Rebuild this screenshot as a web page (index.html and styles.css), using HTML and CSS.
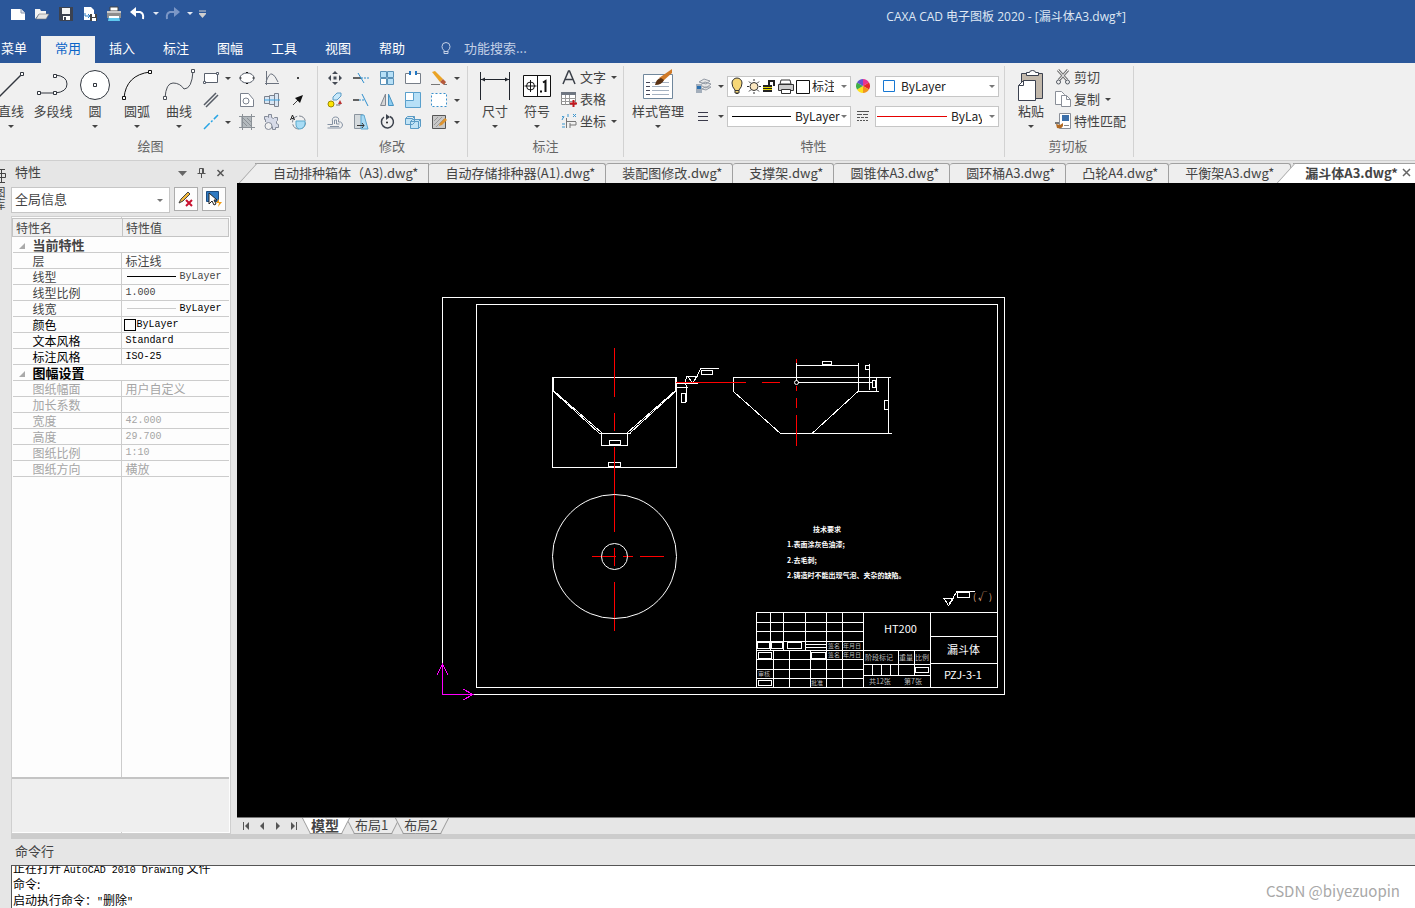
FILE: index.html
```html
<!DOCTYPE html>
<html lang="zh-CN">
<head>
  <meta charset="UTF-8">
  <meta name="viewport" content="width=device-width, initial-scale=1.0">
  <title>CAXA CAD 电子图板 2020</title>
  <link rel="stylesheet" href="styles.css">
</head>
<body>
  <header class="titlebar">
    <div class="quick">
      <button class="quick__button" aria-label="新建"><svg width="16" height="14"><path d="M1 2h10l4 4v7H1z" fill="#fff"/><path d="M11 2v4h4" fill="#dde3ee" stroke="#8a96ad"/></svg></button>
      <button class="quick__button" aria-label="打开"><svg width="16" height="14"><path d="M1 12V2h5l1 2h5v3H5z" fill="#f4f4f4"/><path d="M2 12l3-5h10l-3 5z" fill="#e4e4e4" stroke="#777" stroke-width=".6"/></svg></button>
      <button class="quick__button" aria-label="保存"><svg width="16" height="14"><path d="M1 0h14v14H2l-1-1z" fill="#3c4250"/><path d="M4 1h8v6H4z" fill="#f5f5f5"/><path d="M5 9h7v4H5z" fill="#fff"/><path d="M6 10h2v3H6z" fill="#3c4250"/></svg></button>
      <button class="quick__button" aria-label="另存为"><svg width="16" height="16"><path d="M2 1h7l3 3v10H2z" fill="#fff"/><path d="M3 7v3h5M6 8l2 2-2 2" fill="none" stroke="#2b7ac2"/><path d="M8 8h7v7H8z" fill="#444"/><path d="M10 8h3v3h-3zM10 12h4v3h-4z" fill="#fff"/></svg></button>
      <button class="quick__button" aria-label="打印"><svg width="16" height="16"><path d="M4 1h8v4H4z" fill="#fff" stroke="#444"/><path d="M1 5h14v7H1z" fill="#8d8d8d"/><path d="M1 5h14v2H1z" fill="#c9c9c9"/><path d="M3 10h10l1 5H2z" fill="#5fc8ee"/><path d="M3 10h10v2H3z" fill="#fff"/></svg></button>
      <button class="quick__button" aria-label="撤销"><svg width="16" height="14"><path d="M2 5h8q4 1 3 7" fill="none" stroke="#fff" stroke-width="2"/><path d="M0 5l6-5v10z" fill="#fff"/></svg></button>
      <button class="quick__drop" aria-label="撤销列表"><i class="caret caret--light"></i></button>
      <button class="quick__button quick__button--off" aria-label="恢复"><svg width="16" height="14"><path d="M14 5H6Q2 6 3 12" fill="none" stroke="#7c97c6" stroke-width="2"/><path d="M16 5l-6-5v10z" fill="#7c97c6"/></svg></button>
      <button class="quick__drop" aria-label="恢复列表"><i class="caret caret--light"></i></button>
      <button class="quick__drop" aria-label="自定义快速访问"><svg width="7" height="8"><path d="M0 1h7M0 3.500h7" stroke="#cfcfcf"/><path d="M0 4h7l-3.500 4z" fill="#cfcfcf"/></svg></button>
    </div>
    <h1 class="titlebar__title">CAXA CAD 电子图板 2020 - [漏斗体A3.dwg*]</h1>
  </header>

  <nav class="menu">
    <button class="menu__tab">菜单</button>
    <button class="menu__tab is-active">常用</button>
    <button class="menu__tab">插入</button>
    <button class="menu__tab">标注</button>
    <button class="menu__tab">图幅</button>
    <button class="menu__tab">工具</button>
    <button class="menu__tab">视图</button>
    <button class="menu__tab">帮助</button>
    <label class="menu__search">
      <svg width="12" height="14" fill="none" stroke="#c3d0e6"><path d="M4 9.500Q2 8 2 5.500a4 4 0 0 1 8 0Q10 8 8 9.500v3H4zM4 10.500h4"/></svg>
      <input class="menu__input" type="text" placeholder="功能搜索..." aria-label="功能搜索">
    </label>
  </nav>

  <div class="ribbon">
    <section class="group group--draw">
      <div class="group__body">
        <button class="big"><svg width="34" height="34"><path d="M3 32L28 7" stroke="#32373f" stroke-width="1.500"/><path d="M26.500 5.500h3v3h-3z" fill="#fff" stroke="#32373f"/></svg><span>直线</span><i class="caret"></i></button>
        <button class="big"><svg width="34" height="34" fill="none" stroke="#32373f"><path d="M3 26h16q12-1 12-9t-12-9"/><g fill="#fff"><path d="M1.500 24.500h3v3h-3zM17.500 24.500h3v3h-3zM17.500 7.500h3v3h-3z"/></g></svg><span>多段线</span></button>
        <button class="big"><svg width="34" height="34"><circle cx="17" cy="18" r="14.500" fill="#fff" stroke="#32373f"/><path d="M15.500 16.500h3v3h-3z" fill="#fff" stroke="#32373f"/></svg><span>圆</span><i class="caret"></i></button>
        <button class="big"><svg width="34" height="34" fill="none" stroke="#111"><path d="M4 31Q6 8 30 5"/><path d="M2.500 29.500h3v3h-3zM28.500 3.500h3v3h-3z" fill="#fff"/></svg><span>圆弧</span><i class="caret"></i></button>
        <button class="big"><svg width="34" height="34" fill="none" stroke="#4b5058"><path d="M3 31Q4 16 11 16t11 6Q30 22 31 4"/><path d="M1.500 29.500h3v3h-3zM29.500 2.500h3v3h-3z" fill="#fff"/></svg><span>曲线</span><i class="caret"></i></button>
        <div class="tools tools--draw">
          <button class="tool" aria-label="矩形"><svg width="16" height="16" fill="#fff" stroke="#59606c"><path d="M1.500 3.500h13v9h-13z"/><path d="M13.500 2.500h2v2h-2zM.5 11.500h2v2h-2z"/></svg></button>
          <button class="drop" aria-label="矩形选项"><i class="caret"></i></button>
          <button class="tool" aria-label="椭圆"><svg width="16" height="16" fill="#fff" stroke="#59606c"><ellipse cx="8" cy="8" rx="7" ry="5"/><path d="M7 2.500h2M7 13.500h2M.5 8h2M13.500 8h2" stroke="#111"/></svg></button>
          <button class="tool" aria-label="公式曲线"><svg width="16" height="16" fill="none" stroke="#6b727e"><path d="M2.500 1v14M1 13.500h14M2 12Q5 3 8 4t6 8"/></svg></button>
          <button class="tool" aria-label="点"><svg width="16" height="16"><path d="M7 7h2v2H7z" fill="#444"/></svg></button>
          <button class="tool" aria-label="平行线"><svg width="16" height="16" stroke="#565c66" stroke-width="1.500"><path d="M1 13L13 1M3 15L15 3"/></svg></button>
          <span></span>
          <button class="tool" aria-label="局部放大"><svg width="16" height="16" fill="#fff" stroke="#7b828e"><path d="M1.500 1.500h8l5 6v7h-13z"/><circle cx="7" cy="9" r="3"/></svg></button>
          <button class="tool" aria-label="轴孔"><svg width="16" height="16" fill="#d9e6f3" stroke="#7b828e"><path d="M.5 4.500h5v7h-5zM5.500 3.500h5v9h-5zM10.500 1.500h4v13h-4z"/><path d="M0 8h16" stroke="#3ba2e0"/></svg></button>
          <button class="tool" aria-label="箭头"><svg width="16" height="16"><path d="M3 13l5-5" stroke="#444"/><path d="M13 3l-3 8-5-5z" fill="#111"/></svg></button>
          <button class="tool" aria-label="中心线"><svg width="16" height="16"><path d="M1 15L15 1" stroke="#27a5e5" stroke-width="1.500" stroke-dasharray="8 2 2 2"/></svg></button>
          <button class="drop" aria-label="中心线选项"><i class="caret"></i></button>
          <button class="tool" aria-label="填充"><svg width="16" height="16"><path d="M2 2h11v11H2z" fill="#b3b9bd"/><path d="M3.500 0v16M0 2.500h16M0 13.500h16M12.500 0v16" stroke="#8b9197"/><path d="M4 4l8 8M4 8l4 4M8 4l4 4" stroke="#8b9197"/></svg></button>
          <button class="tool" aria-label="齿形"><svg width="16" height="16" fill="#d7dbe8" stroke="#848b99"><path d="M1.500 8V5.500h-1v-3h3l1 1V.5h3v3l2 1 1-1h3v3l-1 1v2l2 1v3h-3v2h-3v-3"/><circle cx="4.500" cy="12" r="3.500" fill="#f0f0f0"/></svg></button>
          <button class="tool" aria-label="圆弧过渡"><svg width="16" height="16"><circle cx="9" cy="8.500" r="6.500" fill="none" stroke="#7b828e" stroke-dasharray="8 2"/><path d="M6 7h9v3q-1 5-6 5-3-1-3-4z" fill="#a8dcf5" stroke="#5aa9cc"/><path d="M.5 6l2-5 2 5M1.500 4.500h2" fill="none" stroke="#222"/></svg></button>
        </div>
      </div>
      <h2 class="group__label">绘图</h2>
    </section>

    <section class="group group--modify">
      <div class="group__body">
        <div class="tools tools--modify">
          <button class="tool" aria-label="平移"><svg width="16" height="16" fill="#444a54"><path d="M6.500 6.500h3v3h-3zM8 1l3 3H5zM8 15l3-3H5zM1 8l3-3v6zM15 8l-3-3v6z"/></svg></button>
          <button class="tool" aria-label="裁剪"><svg width="16" height="16" fill="none" stroke="#2e8fce"><path d="M0 8h8" stroke="#333" stroke-width="1.500"/><path d="M8 8h8" stroke-dasharray="2 1"/><path d="M5 3l6 10"/></svg></button>
          <button class="tool" aria-label="阵列"><svg width="16" height="16" fill="#b7e0f7" stroke="#5a92b8"><path d="M1.500 1.500h6v6h-6zM8.500 1.500h6v6h-6zM8.500 8.500h6v6h-6z"/><path d="M1.500 8.500h6v6h-6z" fill="#fff"/></svg></button>
          <button class="tool" aria-label="打断"><svg width="16" height="16" fill="#fff"><path d="M5 3.500H.5v10h15v-10H11" stroke="#777e88"/><path d="M4 1h2v4H4zM10 1h2v4h-2z" fill="#2377c2"/></svg></button>
          <button class="tool" aria-label="删除"><svg width="16" height="16"><path d="M1 2l3-1 8 8-3 3z" fill="#eaa325"/><path d="M9 12l3-3 3 3-2 3z" fill="#b4593c"/><path d="M0 14.500h9M13 14.500h3" stroke="#777"/></svg></button>
          <button class="drop" aria-label="删除选项"><i class="caret"></i></button>
          <button class="tool" aria-label="平移复制"><svg width="16" height="16"><circle cx="4" cy="12" r="3" fill="#ffe500" stroke="#9b8a00"/><path d="M6 5l4-4h4v3l-4 4H6z" fill="#c7e8fa" stroke="#5a9bc5"/><path d="M9 13h4v-3" fill="none" stroke="#777"/><path d="M13 8l2 4h-4z" fill="#b33"/></svg></button>
          <button class="tool" aria-label="延伸"><svg width="16" height="16" fill="none"><path d="M0 8h6" stroke="#333" stroke-width="1.500"/><path d="M6 8h5" stroke="#2e8fce" stroke-dasharray="2 1"/><path d="M9 2l6 12" stroke="#2e8fce"/></svg></button>
          <button class="tool" aria-label="镜像"><svg width="16" height="16"><path d="M6.500 2v11.500h-5z" fill="#d6d6d6" stroke="#808790"/><path d="M9.500 2v11.500h5z" fill="#8fcdf0" stroke="#4593c2"/></svg></button>
          <button class="tool" aria-label="缩放"><svg width="16" height="16" fill="#b7e0f7" stroke="#5aa0cc"><path d="M.5.5h15v15H.5z"/><path d="M.5.5h8v8h-8z" fill="#fff"/></svg></button>
          <button class="tool" aria-label="拉伸"><svg width="16" height="16"><path d="M.5 1.500h15v13H.5z" fill="#fff" stroke="#3a90cc" stroke-dasharray="2 2"/></svg></button>
          <button class="drop" aria-label="拉伸选项"><i class="caret"></i></button>
          <button class="tool" aria-label="等距线"><svg width="16" height="16" fill="none" stroke="#8592a3"><path d="M.5 10.500h5V8q-1-5 3-5t3 4v1h2q2 1 2 3t-2 3H.500M3 12.500h9M7.500 10V6h2v4h3"/></svg></button>
          <button class="tool" aria-label="拔模"><svg width="16" height="16"><path d="M1.500.5h8v14h-8z" fill="#d5dadd" stroke="#8b949e"/><path d="M8 1h3l4 14H8z" fill="#a9daf4" stroke="#5ba6cf"/><path d="M4 11.500h7M9 9l2 2.500L9 14" fill="none" stroke="#333"/></svg></button>
          <button class="tool" aria-label="旋转"><svg width="16" height="16"><path d="M11 2.500A6 6 0 1 1 5 3" fill="none" stroke="#3d434d" stroke-width="1.500"/><path d="M7 0v6l4-3z" fill="#3d434d"/><circle cx="8" cy="8.500" r="1" fill="#222"/></svg></button>
          <button class="tool" aria-label="块"><svg width="16" height="16" fill="#c1e3f5" stroke="#5a9bc5"><path d="M.5 4.500l2-2h7v6l-2 2h-7zM.5 4.500h7l2-2M5.500 7.500l2-2h8v7l-2 2h-8zM5.500 7.500h8v7M13.500 7.500l2-2"/></svg></button>
          <button class="tool" aria-label="填充编辑"><svg width="16" height="16"><path d="M1.500 1.500h13v13h-13z" fill="#c8c8c8" stroke="#555"/><path d="M3 7l4-4M3 11l8-8M5 13l8-8" stroke="#999"/><path d="M8 12l1-3 5-5 2 2-5 5z" fill="#dd9430"/></svg></button>
          <button class="drop" aria-label="填充编辑选项"><i class="caret"></i></button>
        </div>
      </div>
      <h2 class="group__label">修改</h2>
    </section>

    <section class="group group--annotate">
      <div class="group__body">
        <button class="big"><svg width="34" height="34" stroke="#22262e"><path d="M2.500 5v28M31.500 5v28M3 12.500h28"/><path d="M3 12.500l4-2v4zM31 12.500l-4-2v4z" fill="#22262e" stroke="none"/></svg><span>尺寸</span><i class="caret"></i></button>
        <button class="big"><svg width="34" height="34" fill="none" stroke="#111"><path d="M3.500 8.500h27v21h-27zM17.500 8v22" fill="#fff"/><circle cx="10.500" cy="19" r="4"/><path d="M10.500 13v12M4.500 19h12"/><path d="M20 24.500h2M23 15.500l2.500-1.500v11" stroke-width="2"/></svg><span>符号</span><i class="caret"></i></button>
        <div class="list">
          <button class="item"><svg width="16" height="16"><path d="M2 15L7.500 2h1L14 15M4.500 10.500h7" fill="none" stroke="#3a3f48" stroke-width="1.500"/></svg>文字<i class="caret"></i></button>
          <button class="item"><svg width="16" height="16"><path d="M.5 1.500h14v12H.5z" fill="#fff" stroke="#888"/><path d="M0 1h15v3H0z" fill="#6f7681"/><path d="M0 7.500h15M0 10.500h15M4.500 4v10M8.500 4v10" stroke="#999"/><path d="M9 12.500h7M12.500 9v7" stroke="#c4161c" stroke-width="2"/></svg>表格</button>
          <button class="item"><svg width="16" height="16" fill="none" stroke="#777"><path d="M5.500 5v10M5 8.500h10M9 12h6v-3M9 15v-5"/><path d="M1 3l2 2M3 3L1 7M12 1l3 3M15 1l-3 3M1 11h3M1 14h3M7 1v3" stroke="#3b96cf"/></svg>坐标<i class="caret"></i></button>
        </div>
      </div>
      <h2 class="group__label">标注</h2>
    </section>

    <section class="group group--props">
      <div class="group__body">
        <button class="big big--wide"><svg width="34" height="34"><path d="M2.500 7.500h29v24h-29z" fill="#fff" stroke="#70879c"/><path d="M5 15.500h4M5 19.500h4M5 23.500h4M5 27.500h4" stroke="#445"/><path d="M11 15.500h17M11 19.500h17M11 23.500h17M11 27.500h17" stroke="#a4b1c0"/><path d="M31 2v4l-9 8-4-3z" fill="#d07a28"/><path d="M14 18q1-6 6-7l3 2q-2 5-9 5z" fill="#5a3213"/></svg><span>样式管理</span><i class="caret"></i></button>
        <div class="fields">
          <button class="tool" aria-label="图层"><svg width="16" height="16"><path d="M4 4l5-3 6 2-4 3zM5 7l5-3 6 2-5 4zM7 11l3-2 6 0-5 3z" fill="#e7e7e7" stroke="#949ba5"/><path d="M1 6h6v9H1z" fill="#a3aebb"/><path d="M2 8h4v3H2z" fill="#2b70b0"/></svg></button>
          <button class="drop" aria-label="图层选项"><i class="caret"></i></button>
          <div class="combo">
            <select class="combo__select combo__select--layer" aria-label="当前图层"><option>标注线</option></select>
            <svg class="combo__mark" width="84" height="20"><path d="M7 14Q4 11 4 7a5 5 0 0 1 10 0q0 4-3 7v3H7z" fill="#f6d777" stroke="#333"/><path d="M7 14.500h4M8 17.500h2" stroke="#333"/><circle cx="26" cy="10.500" r="4" fill="#fbe7c0" stroke="#333"/><path d="M26 3v2M26 16v2M19 10.500h2M31 10.500h2M21 5.500l1.500 1.500M29.500 14l1.500 1.500M31 5.500L29.500 7M22.500 14L21 15.500" stroke="#333"/><path d="M35 9h9v7h-9z" fill="#222"/><path d="M35 11.500h9M35 13.500h9" stroke="#e8d900"/><path d="M41 9V5h5v5" fill="none" stroke="#222" stroke-width="2"/><path d="M53 4h9l1 4H52z" fill="#fff" stroke="#333"/><path d="M50.500 8.500h15v6h-15z" fill="#ccc" stroke="#333"/><path d="M53.500 13.500h9v4h-9z" fill="#fff" stroke="#333"/><path d="M68.500 4.500h13v13h-13z" fill="#fff" stroke="#111"/></svg>
            <i class="caret combo__caret"></i>
          </div>
          <button class="tool" aria-label="颜色"><svg width="14" height="14"><path d="M7 7V0a7 7 0 0 1 6 3.500z" fill="#e93490"/><path d="M7 7l6-3.500a7 7 0 0 1 0 7z" fill="#e6292b"/><path d="M7 7l6 3.500A7 7 0 0 1 7 14z" fill="#f09620"/><path d="M7 7v7a7 7 0 0 1-6-3.500z" fill="#ffe01d"/><path d="M7 7l-6 3.500a7 7 0 0 1 0-7z" fill="#3fae48"/><path d="M7 7L1 3.500A7 7 0 0 1 7 0z" fill="#6556cf"/></svg></button>
          <div class="combo">
            <select class="combo__select combo__select--color" aria-label="当前颜色"><option>ByLayer</option></select>
            <svg class="combo__mark" width="24" height="20"><path d="M7.500 4.500h11v11h-11z" fill="#fff" stroke="#1677d2"/></svg>
            <i class="caret combo__caret"></i>
          </div>
          <button class="tool" aria-label="线宽"><svg width="10" height="10" stroke="#3a3a4a"><path d="M0 1.500h10M0 5.500h10M0 9.500h10"/></svg></button>
          <button class="drop" aria-label="线宽选项"><i class="caret"></i></button>
          <div class="combo">
            <select class="combo__select combo__select--width" aria-label="当前线宽"><option>ByLayer</option></select>
            <svg class="combo__mark" width="64" height="20"><path d="M4 10.500h59" stroke="#000"/></svg>
            <i class="caret combo__caret"></i>
          </div>
          <button class="tool" aria-label="线型"><svg width="12" height="12" stroke="#555"><path d="M0 1.500h12"/><path d="M0 4.500h12" stroke-dasharray="5 1"/><path d="M0 7.500h12" stroke-dasharray="3 1"/><path d="M0 10.500h12" stroke-dasharray="2 1"/></svg></button>
          <div class="combo">
            <select class="combo__select combo__select--type" aria-label="当前线型"><option>ByLayer</option></select>
            <svg class="combo__mark" width="72" height="20"><path d="M1 10.500h70" stroke="#e60000"/></svg>
            <i class="caret combo__caret"></i>
          </div>
        </div>
      </div>
      <h2 class="group__label">特性</h2>
    </section>

    <section class="group group--clip">
      <div class="group__body">
        <button class="big"><svg width="34" height="34"><path d="M7.500 6.500h21v25h-21z" fill="#c2b8ab" stroke="#3c4250"/><path d="M12.500 8.500v-3h3q0-2 3-2t3 2h3v3z" fill="#fff" stroke="#3c4250"/><path d="M4.500 18.500l5-5h12v20h-17z" fill="#fff" stroke="#3c4250"/><path d="M4.500 18.500h5v-5" fill="none" stroke="#3c4250"/></svg><span>粘贴</span><i class="caret"></i></button>
        <div class="list">
          <button class="item"><svg width="16" height="16" fill="none" stroke="#545a64"><path d="M3 1l9 10M13 1L4 11" stroke="#777" stroke-width="3"/><path d="M3 1l9 10M13 1L4 11" stroke="#fff"/><circle cx="3.500" cy="13" r="2"/><circle cx="12.500" cy="13" r="2"/></svg>剪切</button>
          <button class="item"><svg width="16" height="16" fill="#fff" stroke="#8a8f98"><path d="M.5.5h6l3 3v10h-9z"/><path d="M6.500 4.500h5l4 4v7h-9z"/><path d="M11.500 4.500v4h4" fill="none"/></svg>复制<i class="caret"></i></button>
          <button class="item"><svg width="16" height="16"><path d="M4.500.5h11v15h-11z" fill="#fff" stroke="#8a8f98"/><path d="M7 2h7v6H7z" fill="#3b6fa9"/><path d="M9 12.500h5" stroke="#888"/><path d="M1 11l4 1 3-2v3q-1 3-6 2z" fill="#b36a22"/><path d="M0 9h4v2H0z" fill="#777"/></svg>特性匹配</button>
        </div>
      </div>
      <h2 class="group__label">剪切板</h2>
    </section>
  </div>

  <main class="workspace">
    <aside class="dock">
      <button class="dock__tab">
        <svg width="13" height="16" fill="none" stroke="#444"><path d="M0 1.500h12M8.500 2v12M4.500 5.500h8v4h-8zM0 14.500h12"/></svg>
        <span>图库</span>
      </button>
    </aside>

    <section class="panel">
      <header class="panel__head">
        <h2 class="panel__title">特性</h2>
        <button class="panel__icon" aria-label="菜单"><svg width="10" height="10"><path d="M0 3h9l-4.500 5z" fill="#666"/></svg></button>
        <button class="panel__icon" aria-label="固定"><svg width="10" height="10" fill="none" stroke="#555"><path d="M2.500 6V.5h4V6M.5 5.500h8M4.500 6v4M5.500 1v4"/></svg></button>
        <button class="panel__icon" aria-label="关闭"><svg width="10" height="10" stroke="#555" stroke-width="1.500"><path d="M1.500 2l6 6M7.500 2l-6 6"/></svg></button>
      </header>
      <div class="panel__filter">
        <div class="combo combo--panel">
          <select class="combo__select combo__select--panel" aria-label="选择对象"><option>全局信息</option></select>
          <i class="caret combo__caret"></i>
        </div>
        <button class="panel__button" aria-label="清除选择"><svg width="18" height="18"><path d="M2 13l2-4 7-7 2 2-7 7z" fill="#f0b73c" stroke="#444"/><path d="M9 10l6 6M15 10l-6 6" stroke="#c8102e" stroke-width="2"/></svg></button>
        <button class="panel__button" aria-label="快速选择"><svg width="18" height="18"><path d="M1.500 1.500h12v10h-12z" fill="#2f7ac2" stroke="#1c4c80"/><path d="M4 3v11l3-3 2 4 2-1-2-4h3z" fill="#fff" stroke="#222"/><path d="M14 9l-3 4h3l-1 4 4-5h-3z" fill="#f39c12"/></svg></button>
      </div>
      <div class="props">
        <table class="grid">
          <thead>
            <tr><th class="grid__name">特性名</th><th>特性值</th></tr>
          </thead>
          <tbody>
            <tr class="grid__section"><th colspan="2">当前特性</th></tr>
            <tr><td>层</td><td>标注线</td></tr>
            <tr><td>线型</td><td><div class="value"><span class="sample"></span><span class="mono mono--soft">ByLayer</span></div></td></tr>
            <tr><td>线型比例</td><td class="mono mono--soft">1.000</td></tr>
            <tr><td>线宽</td><td><div class="value"><span class="sample sample--thin"></span><span class="mono">ByLayer</span></div></td></tr>
          </tbody>
          <tbody class="grid__dark">
            <tr><td>颜色</td><td><div class="value"><span class="swatch"></span><span class="mono">ByLayer</span></div></td></tr>
            <tr><td>文本风格</td><td class="mono">Standard</td></tr>
            <tr><td>标注风格</td><td class="mono">ISO-25</td></tr>
            <tr class="grid__section"><th colspan="2">图幅设置</th></tr>
          </tbody>
          <tbody class="grid__off">
            <tr><td>图纸幅面</td><td>用户自定义</td></tr>
            <tr><td>加长系数</td><td></td></tr>
            <tr><td>宽度</td><td class="mono">42.000</td></tr>
            <tr><td>高度</td><td class="mono">29.700</td></tr>
            <tr><td>图纸比例</td><td class="mono">1:10</td></tr>
            <tr><td>图纸方向</td><td>横放</td></tr>
          </tbody>
        </table>
        <div class="props__hint"></div>
      </div>
    </section>

    <section class="editor">
      <div class="docs">
        <button class="doc">自动排种箱体（A3).dwg*</button>
        <button class="doc">自动存储排种器(A1).dwg*</button>
        <button class="doc">装配图修改.dwg*</button>
        <button class="doc">支撑架.dwg*</button>
        <button class="doc">圆锥体A3.dwg*</button>
        <button class="doc">圆环桶A3.dwg*</button>
        <button class="doc">凸轮A4.dwg*</button>
        <button class="doc doc--last">平衡架A3.dwg*</button>
        <div class="doc doc--active">
          <button class="doc__name">漏斗体A3.dwg*</button>
          <button class="doc__close" aria-label="关闭"><svg width="9" height="9" stroke="#666" stroke-width="1.500"><path d="M1 1l7 7M8 1L1 8"/></svg></button>
        </div>
      </div>

      <div class="canvas">
        <svg class="drawing" width="800" height="600" viewBox="237 183 800 600">
          <g class="drawing__lines">
            <!-- sheet frame -->
            <path d="M442.500 297.500h562v397h-562zM476.500 304.500h521v383h-521z"/>
            <!-- front view -->
            <path d="M552.500 468v-90.500h124V468M552 467.500h125M553.500 378v14M675.500 378v14"/>
            <path d="M553 391l46 42M554 391l48 42M676 391l-46 42M675 391l-48 42"/>
            <path d="M599 433.500h32M601.500 433v13M627.500 433v13M601 445.500h27M609.500 440.500h11v4h-11zM608.500 462.500h12v4h-12z"/>
            <path d="M676 383.500h22M676 387.500h12M686.500 376l-1 6 1 6v14M681.500 393.500h4v9h-4z"/>
            <path d="M688 376.500h9l-4.500 7zM694 381l7-12.500h18M701.500 370.500h11v4h-11z"/>
            <!-- side view -->
            <path d="M733 377.500h158M733.500 377v14.500l47 42h111M812 433.500l46.500-42.500M858.500 363v28.500h20M888.500 377v56"/>
            <path d="M884.500 400.500h4v9h-4zM796.500 363v18M797 366l1-.5h59l1 .5M822.500 361.500h9v3h-9z"/>
            <path d="M798 382.500h74M872.500 380.500h3v7h-3zM876.500 377v14M869.500 364v26M865.500 365.500h4v4h-4z"/>
            <!-- surface finish mark -->
            <path d="M944 598.500h9.500l-5 7zM949 604l8-12.500h18M957.500 592.500h12v5h-12z"/>
            <!-- title block -->
            <path d="M756.500 687v-74.500h241M863.500 612v75M930.500 612v75M930 636.500h67M930 663.500h67"/>
            <path d="M770.500 612v38M783.500 612v38M805.500 612v38M826.500 612v75M842.500 612v75M773.500 650v37M789.500 650v37M810.500 650v37"/>
            <path d="M756 622.500h107M756 631.500h107M756 641.500h107M756 650.500h174M756 659.500h107M756 669.500h107M756 678.500h107M805 644.500h21M805 647.500h21"/>
            <path d="M863 664.500h67M863 675.500h67M872.500 664v11M881.500 664v11M890.500 664v11M898.500 650v25M914.500 650v25"/>
            <path d="M757.500 642.500h12v6h-12zM771.500 642.500h11v6h-11zM787.500 642.500h14v6h-14zM758.500 652.500h13v6h-13zM811.500 652.500h14v6h-14zM915.500 667.500h13v5h-13zM758.500 680.500h13v5h-13z"/>
          </g>
          <path class="drawing__center" d="M614.500 348v49M614.500 413v18M614.500 447v85M614.500 548v18M614.500 582v49M592 556.500h24M623 556.500h10M640 556.500h24M676 382.500h70M762 382.500h18M796.500 359v4M796.500 386v5M796.500 398v10M796.500 415v31"/>
          <g class="drawing__lines drawing__lines--round">
            <circle cx="614.500" cy="556.500" r="62"/>
            <circle cx="614.500" cy="556.500" r="13"/>
            <circle cx="796.500" cy="382.500" r="2"/>
          </g>
          <path class="drawing__axis" d="M442.500 664v30.500h31M437 675l5.500-11 5.500 11M463 689l10 5.500-10 5.500"/>

          <g class="note">
            <text x="813" y="532">技术要求</text>
            <text x="787" y="547">1.表面涂灰色油漆;</text>
            <text x="787" y="563">2.去毛刺;</text>
            <text x="787" y="578">2.铸造时不能出现气泡、夹杂的缺陷。</text>
          </g>
          <g class="stamp">
            <text x="884" y="633">HT200</text>
            <text x="947" y="654">漏斗体</text>
            <text x="944" y="679">PZJ-3-1</text>
          </g>
          <g class="cell">
            <text x="828" y="648">签名</text><text x="843" y="648">年月日</text>
            <text x="828" y="657">签名</text><text x="843" y="657">年月日</text>
            <text x="758" y="676">审核</text><text x="811" y="685">批准</text>
          </g>
          <g class="cell cell--large">
            <text x="865" y="660">阶段标记</text><text x="899" y="660">重量</text><text x="915" y="660">比例</text>
            <text x="869" y="684">共12张</text><text x="904" y="684">第7张</text>
          </g>
          <text class="finish" x="973" y="600">( √ )</text>
        </svg>
      </div>

      <div class="sheets">
        <button class="sheets__nav" aria-label="第一页"><svg width="8" height="8" fill="#555"><path d="M1 0h1v8H1zM7 0v8L3 4z"/></svg></button>
        <button class="sheets__nav" aria-label="上一页"><svg width="8" height="8" fill="#555"><path d="M6 0v8L2 4z"/></svg></button>
        <button class="sheets__nav" aria-label="下一页"><svg width="8" height="8" fill="#555"><path d="M2 0v8l4-4z"/></svg></button>
        <button class="sheets__nav" aria-label="最后一页"><svg width="8" height="8" fill="#555"><path d="M6 0h1v8H6zM1 0v8l4-4z"/></svg></button>
        <button class="sheet is-active">模型</button>
        <button class="sheet">布局1</button>
        <button class="sheet">布局2</button>
      </div>
    </section>
  </main>

  <footer class="command">
    <h2 class="command__title">命令行</h2>
    <div class="command__log">
      <p>正在打开 <span class="mono">AutoCAD 2010 Drawing</span> 文件</p>
      <p>命令:</p>
      <p>启动执行命令：<span class="mono">"</span>删除<span class="mono">"</span></p>
    </div>
    <span class="watermark">CSDN @biyezuopin</span>
  </footer>
</body>
</html>
```
FILE: styles.css
```css
* {
  box-sizing: border-box;
}

html,
body {
  margin: 0;
  height: 100%;
  overflow: hidden;
}

body {
  display: flex;
  flex-direction: column;
  background: #e6e6e6;
  color: #444;
  font-family: "Noto Sans CJK SC", "Noto Sans", sans-serif;
  font-size: 13px;
  line-height: 16px;
}

h1,
h2,
p {
  margin: 0;
  font-size: inherit;
  font-weight: normal;
}

button,
input,
select {
  margin: 0;
  padding: 0;
  border: 0;
  background: none;
  color: inherit;
  font: inherit;
}

button {
  display: flex;
  align-items: center;
  justify-content: center;
  white-space: nowrap;
}

svg {
  display: block;
  flex: none;
}

.caret {
  flex: none;
  width: 0;
  height: 0;
  border: 3px solid transparent;
  border-top-color: #444;
  border-bottom: 0;
}

.caret--light {
  border-top-color: #e3e8f2;
}

.mono {
  font-family: "Liberation Mono", monospace;
  font-size: 10px;
  line-height: 10px;
}

/* title bar */

.titlebar {
  flex: none;
  display: flex;
  align-items: center;
  height: 35px;
  padding-bottom: 8px;
  background: #2b579a;
}

.quick {
  display: flex;
  align-items: center;
  padding-left: 6px;
}

.quick__button {
  width: 24px;
  height: 24px;
}

.quick__drop {
  width: 12px;
  height: 24px;
}

.quick__button--off {
  margin-left: -2px;
}

.titlebar__title {
  margin: 6px 289px 0 auto;
  color: #dfe7f3;
  font-family: "Open Sans", "Noto Sans CJK SC", sans-serif;
  font-size: 12px;
}

.menu {
  flex: none;
  display: flex;
  height: 28px;
  margin-left: -13px;
  padding-top: 1px;
  background: #2b579a;
  color: #fff;
}

.menu__tab {
  width: 54px;
  padding-bottom: 3px;
}

.menu__tab.is-active {
  background: #f0f0f0;
  color: #0a64c8;
}

.menu__search {
  display: flex;
  align-items: center;
  gap: 12px;
  padding: 0 0 3px 21px;
}

.menu__input {
  width: 160px;
  outline: 0;
}

.menu__input::placeholder {
  color: #c3d0e6;
  opacity: 1;
}

/* ribbon */

.ribbon {
  flex: none;
  display: flex;
  height: 98px;
  padding: 3px 0;
  overflow: hidden;
  background: #f0f0f0;
  border-bottom: 1px solid #cfcfcf;
}

.group {
  flex: none;
  display: flex;
  flex-direction: column;
  border-right: 1px solid #d2d2d2;
}

.group--draw {
  margin-left: -10px;
  padding-right: 6px;
}

.group--modify {
  padding: 0 5px 0 4px;
}

.group--annotate {
  padding: 0 6px;
}

.group--props {
  padding: 0 5px 0 4px;
}

.group--clip {
  padding: 0 7px 0 5px;
}

.group__body {
  display: flex;
  height: 68px;
  padding-top: 1px;
}

.group__label {
  margin-top: 4px;
  color: #666;
  text-align: center;
}

.big {
  flex-direction: column;
  justify-content: flex-start;
  width: 42px;
}

.big--wide {
  width: 60px;
}

.big span {
  margin: 2px 0 6px;
}

.tools {
  display: grid;
  grid-auto-rows: 22px;
}

.tools--draw {
  grid-template-columns: 22px 12px 25px 26px 26px;
}

.tools--modify {
  grid-template-columns: repeat(5, 26px) 10px;
}

.list {
  display: grid;
  grid-auto-rows: 22px;
  padding-left: 3px;
}

.item {
  justify-content: flex-start;
  gap: 3px;
  padding-bottom: 2px;
}

.item .caret {
  margin-left: 2px;
}

.fields {
  display: grid;
  grid-template-columns: 24px 12px 124px 24px 124px;
  grid-auto-rows: 30px;
  align-items: center;
  height: 60px;
  margin: 4px 0 0 3px;
}

.combo {
  position: relative;
}

.combo__select {
  display: block;
  width: 100%;
  height: 21px;
  padding-right: 16px;
  appearance: none;
  background: #fff;
  border: 1px solid #c6c6c6;
  color: #222;
  font-size: 12px;
}

.combo__select--layer {
  padding-left: 84px;
}

.combo__select--color {
  padding-left: 25px;
}

.combo__select--width {
  padding: 0 10px 0 67px;
}

.combo__select--type {
  padding-left: 75px;
}

.combo__mark {
  position: absolute;
  top: 0;
  left: 1px;
  pointer-events: none;
}

.combo__caret {
  position: absolute;
  top: 9px;
  right: 4px;
  border-top-color: #777;
  pointer-events: none;
}

/* workspace */

.workspace {
  flex: 1;
  display: flex;
  min-height: 0;
}

.dock {
  flex: none;
  width: 11px;
  padding-top: 7px;
}

.dock__tab {
  flex-direction: column;
  gap: 2px;
  width: 13px;
  margin-left: -7px;
}

.dock__tab span {
  width: 12px;
  font-size: 12px;
  line-height: 12px;
  white-space: normal;
}

.panel {
  flex: none;
  display: flex;
  flex-direction: column;
  width: 220px;
}

.panel__head {
  display: flex;
  align-items: center;
  height: 24px;
  padding-right: 1px;
}

.panel__title {
  flex: 1;
  padding: 0 0 2px 4px;
}

.panel__icon {
  width: 19px;
  height: 19px;
}

.panel__filter {
  display: flex;
  gap: 4px;
  padding: 2px 0 3px;
}

.combo--panel {
  width: 159px;
}

.combo__select--panel {
  height: 26px;
  padding: 0 16px 2px 3px;
  color: #444;
  font-size: 13px;
}

.combo--panel .combo__caret {
  top: 12px;
  right: 7px;
}

.panel__button {
  width: 24px;
  height: 24px;
  background: #fdfdfd;
  border: 1px solid #adadad;
}

.props {
  flex: 1;
  display: flex;
  flex-direction: column;
  justify-content: space-between;
  padding: 1px 1px 1px 0;
  border: 1px solid #cfcfcf;
  background: #fdfdfd linear-gradient(#ccc, #ccc) 109px 0 / 1px 100% no-repeat;
}

.props__hint {
  height: 55px;
  background: #efefef;
  border-top: 2px solid #c4c4c4;
}

.grid {
  width: 100%;
  table-layout: fixed;
  border-collapse: collapse;
  font-size: 12px;
  line-height: 15px;
}

.grid th,
.grid td {
  height: 16px;
  padding: 0 3px;
  border-bottom: 1px solid #ccc;
  font-weight: normal;
  text-align: left;
  white-space: nowrap;
}

.grid thead th {
  height: 18px;
  border: 1px solid #c4c4c4;
  background: #f0f0f0;
}

.grid__name {
  width: 110px;
}

.grid td:first-child {
  padding-left: 20px;
}

.grid .grid__section th {
  position: relative;
  padding-left: 20px;
  background: #fdfdfd;
  font-size: 13px;
  font-weight: bold;
}

.grid__section th::before {
  content: "";
  position: absolute;
  left: 6px;
  top: 6px;
  border: 3px solid #aaa;
  border-top-color: transparent;
  border-left-color: transparent;
}

.grid td.mono {
  font-size: 10px;
}

.grid .mono {
  color: #000;
}

.grid .mono--soft {
  color: #444;
}

.grid__dark {
  color: #000;
}

.grid__off,
.grid__off .mono {
  color: #a5a5a5;
}

.value {
  display: flex;
  align-items: center;
  height: 15px;
}

.sample {
  width: 49px;
  height: 1px;
  margin: 0 4px 0 1px;
  background: #000;
}

.sample--thin {
  background: #ccc;
}

.swatch {
  width: 12px;
  height: 12px;
  margin: 0 1px 0 -2px;
  border: 1px solid #000;
}

/* editor */

.editor {
  flex: 1;
  display: flex;
  flex-direction: column;
  min-width: 0;
  margin-left: 6px;
}

.docs {
  flex: none;
  display: flex;
  height: 22px;
  padding: 2px 0 0 18px;
  overflow: hidden;
}

.doc {
  position: relative;
  flex: none;
  padding: 0 10px 2px 16px;
  background: #eee;
  border: 1px solid #a0a0a0;
  border-width: 1px 1px 0 0;
  border-radius: 3px 3px 0 0;
}

.doc:first-child::before,
.doc--active::before {
  content: "";
  position: absolute;
  z-index: -1;
  top: -1px;
  left: -9px;
  width: 40px;
  height: 22px;
  background: inherit;
  border: 1px solid #a0a0a0;
  border-right: 0;
  transform: skewX(-42deg);
}

.doc:first-child,
.doc--active {
  z-index: 1;
  padding-left: 18px;
  border-left: 0;
  border-radius: 0;
}

.doc--last {
  padding-right: 16px;
}

.doc--active {
  flex: 1;
  display: flex;
  align-items: center;
  padding: 0 4px 2px 12px;
  margin-left: 2px;
  background: #fff;
  border-right: 0;
  font-weight: bold;
}

.doc__name {
  flex: 1;
  justify-content: flex-start;
}

.canvas {
  flex: 1;
  min-height: 0;
  overflow: hidden;
  background: #000;
}

.drawing {
  shape-rendering: crispEdges;
}

.drawing__lines {
  fill: none;
  stroke: #fff;
}

.drawing__lines--round {
  shape-rendering: auto;
}

.drawing__center {
  stroke: #f00;
}

.drawing__axis {
  fill: none;
  stroke: #f0f;
}

.note {
  fill: #fff;
  font-size: 7px;
  font-weight: bold;
}

.stamp {
  fill: #fff;
  font-size: 11px;
}

.cell {
  fill: #bbb;
  font-size: 6px;
}

.cell--large {
  font-size: 7px;
}

.finish {
  fill: #e0b48c;
  font-size: 9px;
}

.sheets {
  flex: none;
  display: flex;
  height: 17px;
  padding-left: 1px;
  background: #e6e6e6;
  border-top: 1px solid #777;
}

.sheets__nav {
  width: 16px;
}

.sheet {
  position: relative;
  z-index: 0;
  height: 16px;
  padding: 0 8px 2px;
}

.sheet.is-active {
  z-index: 1;
  margin-left: 1px;
  font-size: 14px;
  font-weight: bold;
}

.sheet::before,
.sheet::after {
  content: "";
  position: absolute;
  z-index: -1;
  top: 0;
  bottom: 0;
  width: 50%;
  background: #ebebeb;
  border-bottom: 1px solid #999;
}

.sheet::before {
  left: 3px;
  border-left: 1px solid #999;
  transform: skewX(27deg);
}

.sheet::after {
  right: 1px;
  border-right: 1px solid #999;
  transform: skewX(-27deg);
}

.sheet.is-active::before,
.sheet.is-active::after {
  background: #fff;
}

/* command line */

.command {
  flex: none;
  position: relative;
  margin-left: 11px;
  border-top: 5px solid #ccc;
}

.command__title {
  height: 26px;
  padding: 4px;
}

.command__log {
  display: flex;
  flex-direction: column;
  justify-content: flex-end;
  height: 43px;
  padding-left: 1px;
  overflow: hidden;
  background: #fff;
  border: 1px solid #555;
  border-width: 1px 0 0 1px;
  color: #000;
  font-size: 12px;
}

.command__log p {
  flex: none;
  height: 16px;
}

.watermark {
  position: absolute;
  right: 15px;
  bottom: 9px;
  color: #a8a8a8;
  font-size: 15px;
}
```
